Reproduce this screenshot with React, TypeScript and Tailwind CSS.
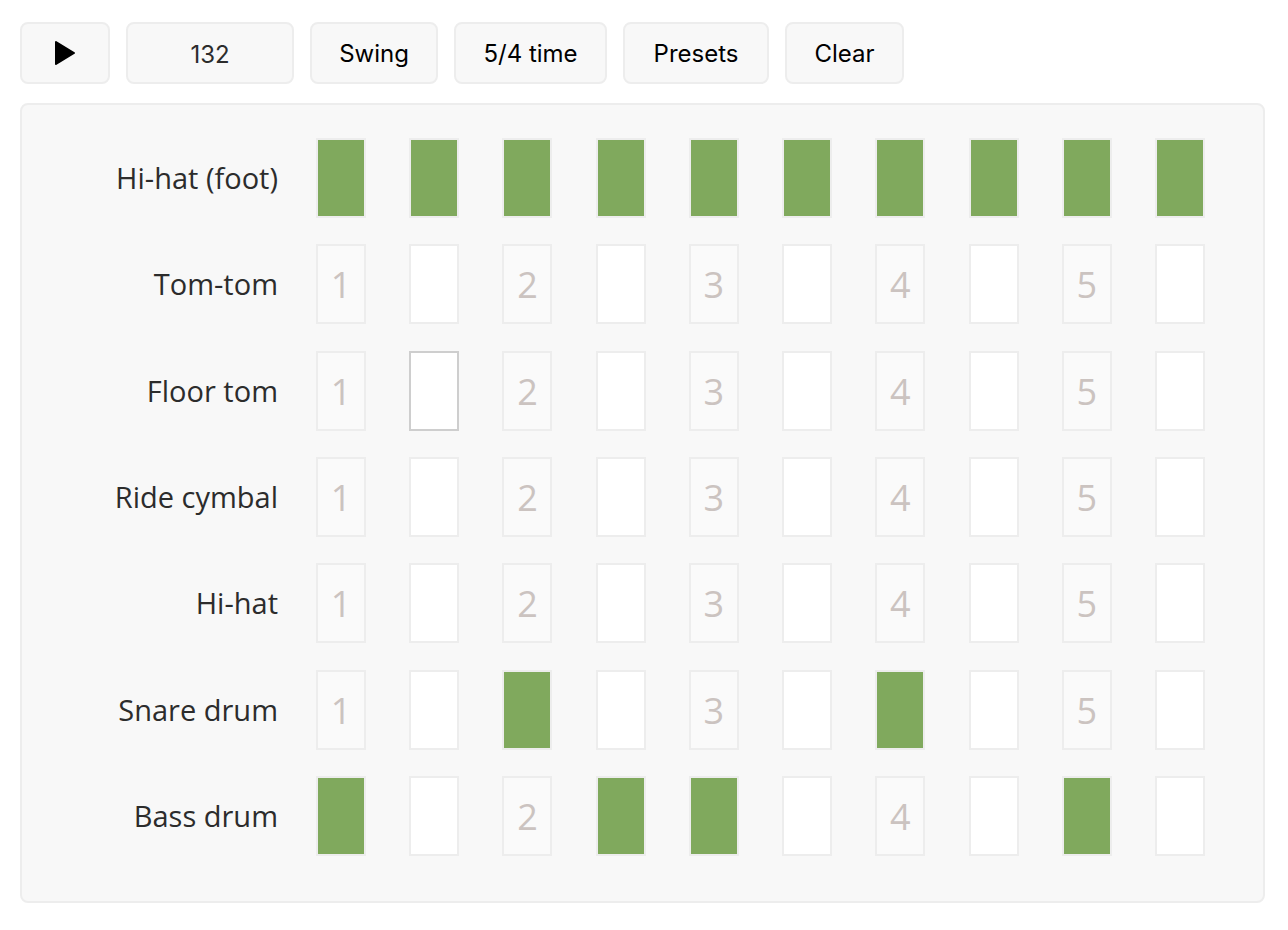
import { useState } from "react";

type Track = { name: string; steps: number[] };

const STEP_COUNT = 10;

const initialTracks: Track[] = [
  { name: "Hi-hat (foot)", steps: [0, 1, 2, 3, 4, 5, 6, 7, 8, 9] },
  { name: "Tom-tom", steps: [] },
  { name: "Floor tom", steps: [] },
  { name: "Ride cymbal", steps: [] },
  { name: "Hi-hat", steps: [] },
  { name: "Snare drum", steps: [2, 6] },
  { name: "Bass drum", steps: [0, 3, 4, 8] },
];

const control =
  "h-[62px] rounded-lg border-2 border-[#ededed] bg-[#f8f8f8] text-2xl hover:border-[#cecece]";

function Step({
  index,
  on,
  current,
  label,
  onToggle,
}: {
  index: number;
  on: boolean;
  current: boolean;
  label: string;
  onToggle: () => void;
}) {
  const isBeat = index % 2 === 0;
  const fill = on ? "bg-[#80a95d]" : isBeat ? "bg-[#fafafa]" : "bg-white";
  const border = current ? "border-[#cecece]" : "border-[#ededed]";
  return (
    <button
      type="button"
      aria-label={label}
      aria-pressed={on}
      onClick={onToggle}
      className={`flex h-20 w-[50px] shrink-0 items-center justify-center border-2 pt-0.5 text-4xl text-[#cbc3c0] hover:border-[#cecece] ${fill} ${border}`}
    >
      {isBeat && !on ? index / 2 + 1 : null}
    </button>
  );
}

export default function App() {
  const [tracks, setTracks] = useState(initialTracks);
  const [tempo, setTempo] = useState("132");

  const toggle = (row: number, step: number) =>
    setTracks((all) =>
      all.map((t, i) =>
        i !== row
          ? t
          : {
              ...t,
              steps: t.steps.includes(step)
                ? t.steps.filter((s) => s !== step)
                : [...t.steps, step],
            },
      ),
    );

  return (
    <div className="flex min-h-screen flex-col gap-[19px] bg-white pt-[22px] pr-[23px] pb-[27px] pl-5">
      <div className="flex flex-wrap gap-4 font-['Inter',sans-serif] text-black">
        <button
          type="button"
          aria-label="Play"
          className={`${control} flex w-[90px] items-center justify-center`}
        >
          <svg width="22" height="26" viewBox="0 0 22 26" aria-hidden="true">
            <path
              d="M2 2 L20 13 L2 24 Z"
              fill="black"
              stroke="black"
              strokeWidth="2"
              strokeLinejoin="round"
            />
          </svg>
        </button>
        <input
          type="text"
          inputMode="numeric"
          aria-label="Tempo"
          value={tempo}
          onChange={(e) => setTempo(e.target.value)}
          className={`${control} w-[168px] pt-0.5 text-center text-[#2c2c2c]`}
        />
        <button type="button" className={`${control} w-[128px] pt-0.5`}>
          Swing
        </button>
        <button type="button" className={`${control} w-[153px] pt-0.5`}>
          5/4 time
        </button>
        <button type="button" className={`${control} w-[146px] pt-0.5`}>
          Presets
        </button>
        <button
          type="button"
          className={`${control} w-[119px] pt-0.5`}
          onClick={() => setTracks((all) => all.map((t) => ({ ...t, steps: [] })))}
        >
          Clear
        </button>
      </div>

      <main className="flex flex-1 flex-col justify-between gap-4 rounded-lg border-2 border-[#ededed] bg-[#f8f8f8] pt-[33px] pr-[58px] pb-[45px] pl-10 font-['Open_Sans',sans-serif]">
        {tracks.map((track, row) => (
          <div
            key={track.name}
            role="group"
            aria-label={track.name}
            className="flex items-center gap-[38px]"
          >
            <span className="w-[216px] shrink-0 text-right text-[29px] leading-10 text-[#2c2c2c]">
              {track.name}
            </span>
            <div className="flex flex-1 justify-between">
              {Array.from({ length: STEP_COUNT }, (_, i) => (
                <Step
                  key={i}
                  index={i}
                  on={track.steps.includes(i)}
                  current={row === 2 && i === 1}
                  label={`${track.name}, step ${i + 1}`}
                  onToggle={() => toggle(row, i)}
                />
              ))}
            </div>
          </div>
        ))}
      </main>
    </div>
  );
}
